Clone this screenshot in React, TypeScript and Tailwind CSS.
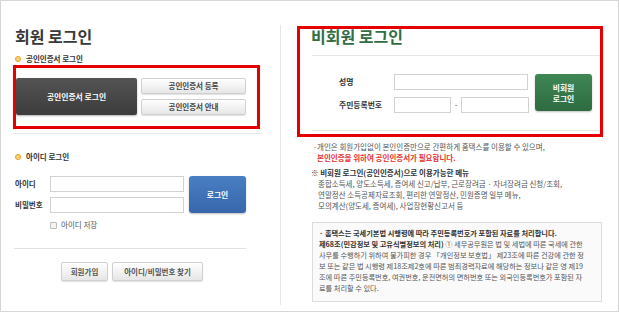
import React from "react";

const font = "font-['Noto_Sans_CJK_KR','Noto_Sans',sans-serif]";

function Dot() {
  return (
    <span className="inline-block h-[6px] w-[6px] shrink-0 rounded-full border-[1.5px] border-[#ee9b21] bg-[#fbd27c]" />
  );
}

function SectionLabel({ children }: { children: React.ReactNode }) {
  return (
    <div className="ml-[2px] flex h-[10px] items-center gap-[5px] text-[7.5px] font-bold leading-[10px] text-[#333]">
      <Dot />
      <span>{children}</span>
    </div>
  );
}

function LightButton({ children, className }: { children: React.ReactNode; className?: string }) {
  return (
    <button
      type="button"
      className={
        "flex items-center justify-center rounded-[2px] border border-[#d0d0d0] bg-linear-to-b from-white to-[#e6e6e6] text-[7.5px] font-bold text-[#444] shadow-[0_1px_1px_rgba(0,0,0,0.12)] " +
        (className ?? "")
      }
    >
      {children}
    </button>
  );
}

function TextInput({ className }: { className: string }) {
  return <input type="text" className={"border border-[#d2d2d2] bg-white " + className} />;
}

function MemberLogin() {
  return (
    <div className="mt-[24px] mb-[6px] flex w-[280px] flex-col border-r border-[#e6e6e6] pl-[12px]">
      <h2 className="ml-[2px] mt-[1px] text-[16px] font-bold leading-[20px] text-[#383838]">회원 로그인</h2>

      <div className="mt-[8px]">
        <SectionLabel>공인인증서 로그인</SectionLabel>
      </div>

      <div className="mt-[14px] flex gap-[4px] pl-[3px]">
        <button
          type="button"
          className="h-[37px] w-[121px] rounded-[2px] bg-linear-to-b from-[#545454] to-[#3c3c3c] text-[7.8px] font-bold text-white shadow-[0_1px_2px_rgba(0,0,0,0.3)]"
        >
          공인인증서 로그인
        </button>
        <div className="flex flex-col gap-[5px]">
          <LightButton className="h-[16px] w-[105px]">공인인증서 등록</LightButton>
          <LightButton className="h-[16px] w-[105px]">공인인증서 안내</LightButton>
        </div>
      </div>

      <div className="mt-[18px] w-[250px] border-t border-[#e8e8e8]" />

      <div className="mt-[18px]">
        <SectionLabel>아이디 로그인</SectionLabel>
      </div>

      <div className="ml-[2px] mt-[14px] flex">
        <div className="flex flex-col gap-[5px] text-[7.5px] font-bold leading-[16px] text-[#333]">
          <div className="flex h-[16px] items-center">
            <span className="w-[35px]">아이디</span>
            <TextInput className="h-[16px] w-[134px]" />
          </div>
          <div className="flex h-[16px] items-center">
            <span className="w-[35px]">비밀번호</span>
            <TextInput className="h-[16px] w-[134px]" />
          </div>
        </div>
        <button
          type="button"
          className="ml-[5px] h-[37px] w-[57px] rounded-[3px] bg-linear-to-b from-[#4a7ec3] to-[#3766ab] text-[7.8px] font-bold text-white shadow-[0_1px_2px_rgba(0,0,0,0.25)]"
        >
          로그인
        </button>
      </div>

      <div className="ml-[37px] mt-[7px] flex h-[10px] items-center gap-[4px] text-[7.5px] text-[#555]">
        <span className="h-[7px] w-[7px] rounded-[1px] border border-[#bdbdbd] bg-[#f3f3f3]" />
        <span>아이디 저장</span>
      </div>

      <div className="ml-[1px] mt-[18px] w-[232px] border-t border-[#e2e2e2]" />

      <div className="mt-[13px] flex gap-[4px] pl-[48px]">
        <LightButton className="h-[19px] w-[47px] text-[#555]">회원가입</LightButton>
        <LightButton className="h-[19px] w-[91px] text-[#555]">아이디/비밀번호 찾기</LightButton>
      </div>
    </div>
  );
}

function GuestLogin() {
  return (
    <div className="flex flex-1 flex-col pl-[30px]">
      <h2 className="mt-[25px] text-[16px] font-bold leading-[20px] text-[#336d45]">비회원 로그인</h2>
      <div className="ml-[1px] mt-[9px] w-[288px] border-t border-[#e6e6e6]" />

      <div className="ml-[28px] mt-[18px] flex text-[7.8px] font-bold text-[#333]">
        <div className="flex flex-col gap-[7px]">
          <div className="flex h-[16px] items-center">
            <span className="w-[55px]">성명</span>
            <TextInput className="h-[16px] w-[134px]" />
          </div>
          <div className="flex h-[16px] items-center">
            <span className="w-[55px]">주민등록번호</span>
            <TextInput className="h-[16px] w-[57px]" />
            <span className="w-[10px] text-center font-normal text-[#555]">-</span>
            <TextInput className="h-[16px] w-[68px]" />
          </div>
        </div>
        <button
          type="button"
          className="ml-[6px] flex h-[37px] w-[57px] flex-col items-center justify-center rounded-[3px] bg-linear-to-b from-[#3f8755] to-[#2e6b41] text-[7.8px] font-bold leading-[11px] text-white shadow-[0_1px_2px_rgba(0,0,0,0.25)]"
        >
          <span>비회원</span>
          <span>로그인</span>
        </button>
      </div>

      <div className="ml-[1px] mt-[17px] w-[288px] border-t border-[#e6e6e6]" />

      <div className="mt-[10px] text-[7.5px] leading-[11px] text-[#555]">
        <div className="ml-[2px] flex">
          <span className="w-[4px]">·</span>
          <span>개인은 회원가입없이 본인인증만으로 간편하게 홈택스를 이용할 수 있으며,</span>
        </div>
        <div className="ml-[6px] font-bold text-[#e8352f]">본인인증을 위하여 공인인증서가 필요합니다.</div>
        <div className="mt-[4px] font-bold text-[#333]">※ 비회원 로그인(공인인증서)으로 이용가능한 메뉴</div>
        <div className="ml-[7px]">
          <div>종합소득세, 양도소득세, 증여세 신고/납부, 근로장려금 · 자녀장려금 신청/조회,</div>
          <div>연말정산 소득공제자료조회, 편리한 연말정산, 민원증명 일부 메뉴,</div>
          <div>모의계산(양도세, 증여세), 사업장현황신고서 등</div>
        </div>
      </div>

      <div className="ml-[1px] mt-[11px] h-[80px] w-[290px] border border-[#dcdcdc] bg-[#fafafa] px-[6px] pt-[5px] text-[7.2px] leading-[11px] text-[#555]">
        <div className="font-bold text-[#333]">· 홈택스는 국세기본법 시행령에 따라 주민등록번호가 포함된 자료를 처리합니다.</div>
        <div>
          <span className="font-bold text-[#333]">제68조(민감정보 및 고유식별정보의 처리)</span> ① 세무공무원은 법 및 세법에 따른 국세에 관한
        </div>
        <div>사무를 수행하기 위하여 불가피한 경우 「개인정보 보호법」 제23조에 따른 건강에 관한 정</div>
        <div>보 또는 같은 법 시행령 제18조제2호에 따른 범죄경력자료에 해당하는 정보나 같은 영 제19</div>
        <div>조에 따른 주민등록번호, 여권번호, 운전면허의 면허번호 또는 외국인등록번호가 포함된 자</div>
        <div>료를 처리할 수 있다.</div>
      </div>
    </div>
  );
}

export default function App() {
  return (
    <div className={"relative h-[312px] w-[619px] overflow-hidden border border-[#d6d6d6] bg-white " + font}>
      <div className="flex h-full">
        <MemberLogin />
        <GuestLogin />
      </div>
      {/* red annotation boxes drawn over the page */}
      <div className="pointer-events-none absolute left-[12px] top-[64px] h-[64px] w-[247px] border-[3px] border-[#e40000]" />
      <div className="pointer-events-none absolute left-[296px] top-[25px] h-[111px] w-[306px] border-[3px] border-[#e40000]" />
    </div>
  );
}
